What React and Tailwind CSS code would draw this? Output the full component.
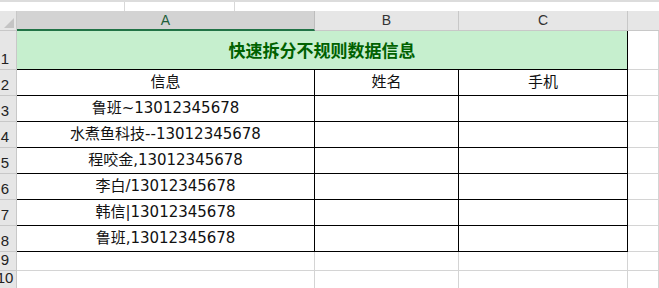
import React from 'react';

const data = [
  '鲁班~13012345678',
  '水煮鱼科技--13012345678',
  '程咬金,13012345678',
  '李白/13012345678',
  '韩信|13012345678',
  '鲁班,13012345678',
];

function RowHead({ n }) {
  return (
    <div className="box-border border-r border-b border-[#c8c8c8] bg-[#e6e6e6] overflow-hidden flex items-end">
      <div className="w-[26px] -ml-[8px] shrink-0 text-center text-[15px] leading-none pb-[3px] text-[#222] font-['Liberation_Sans',sans-serif]">
        {n}
      </div>
    </div>
  );
}

export default function App() {
  const cell = "box-border border-r border-b border-black bg-white flex items-center justify-center text-[15px] text-[#111] font-['DejaVu_Sans','Noto_Sans_CJK_SC',sans-serif] whitespace-nowrap overflow-hidden";
  const gray = "box-border border-r border-b border-[#d4d4d4] bg-white";
  return (
    <div className="w-[659px] h-[288px] overflow-hidden bg-white">
      <div className="grid grid-cols-[17px_298px_144px_169px_1fr] grid-rows-[11px_20px_39px_repeat(7,26px)_19px_18px]">
        {/* top strip */}
        <div className="col-span-5 box-border border-t-2 border-[#dcdcdc] bg-white flex">
          <div className="w-[125px] box-border border-r border-[#d8d8d8]" />
          <div className="w-[110px] box-border border-r border-[#d8d8d8]" />
          <div className="flex-1" />
        </div>
        {/* column headers */}
        <div className="box-border border-r border-b border-[#c8c8c8] bg-[#e6e6e6] flex items-end justify-end p-[2px]">
          <svg width="10" height="10" viewBox="0 0 10 10"><polygon points="10,0 10,10 0,10" fill="#c4c4c4" /></svg>
        </div>
        <div className="box-border border-r border-[#bdbdbd] border-b-2 border-b-[#217346] bg-[#d3d3d3] flex items-center justify-center text-[14px] text-[#1f5f3a] font-['Liberation_Sans',sans-serif]">A</div>
        <div className="box-border border-r border-b border-[#c8c8c8] bg-[#e6e6e6] flex items-center justify-center text-[14px] text-[#333] font-['Liberation_Sans',sans-serif]">B</div>
        <div className="box-border border-r border-b border-[#c8c8c8] bg-[#e6e6e6] flex items-center justify-center text-[14px] text-[#333] font-['Liberation_Sans',sans-serif]">C</div>
        <div className="box-border border-b border-[#c8c8c8] bg-[#e6e6e6]" />

        {/* row 1 */}
        <RowHead n={1} />
        <div className="col-span-3 box-border border-r border-b border-black bg-[#c6efce] flex items-center justify-center text-[17px] font-bold text-[#006100] font-['Noto_Sans_CJK_SC',sans-serif]">
          快速拆分不规则数据信息
        </div>
        <div className={gray} />

        {/* row 2 */}
        <RowHead n={2} />
        <div className={cell}>信息</div>
        <div className={cell}>姓名</div>
        <div className={cell}>手机</div>
        <div className={gray} />

        {data.map((t, i) => (
          <React.Fragment key={i}>
            <RowHead n={i + 3} />
            <div className={cell}>{t}</div>
            <div className={cell} />
            <div className={cell} />
            <div className={gray} />
          </React.Fragment>
        ))}

        {[9, 10].map((n) => (
          <React.Fragment key={n}>
            <RowHead n={n} />
            <div className={gray} />
            <div className={gray} />
            <div className={gray} />
            <div className={gray} />
          </React.Fragment>
        ))}
      </div>
    </div>
  );
}
